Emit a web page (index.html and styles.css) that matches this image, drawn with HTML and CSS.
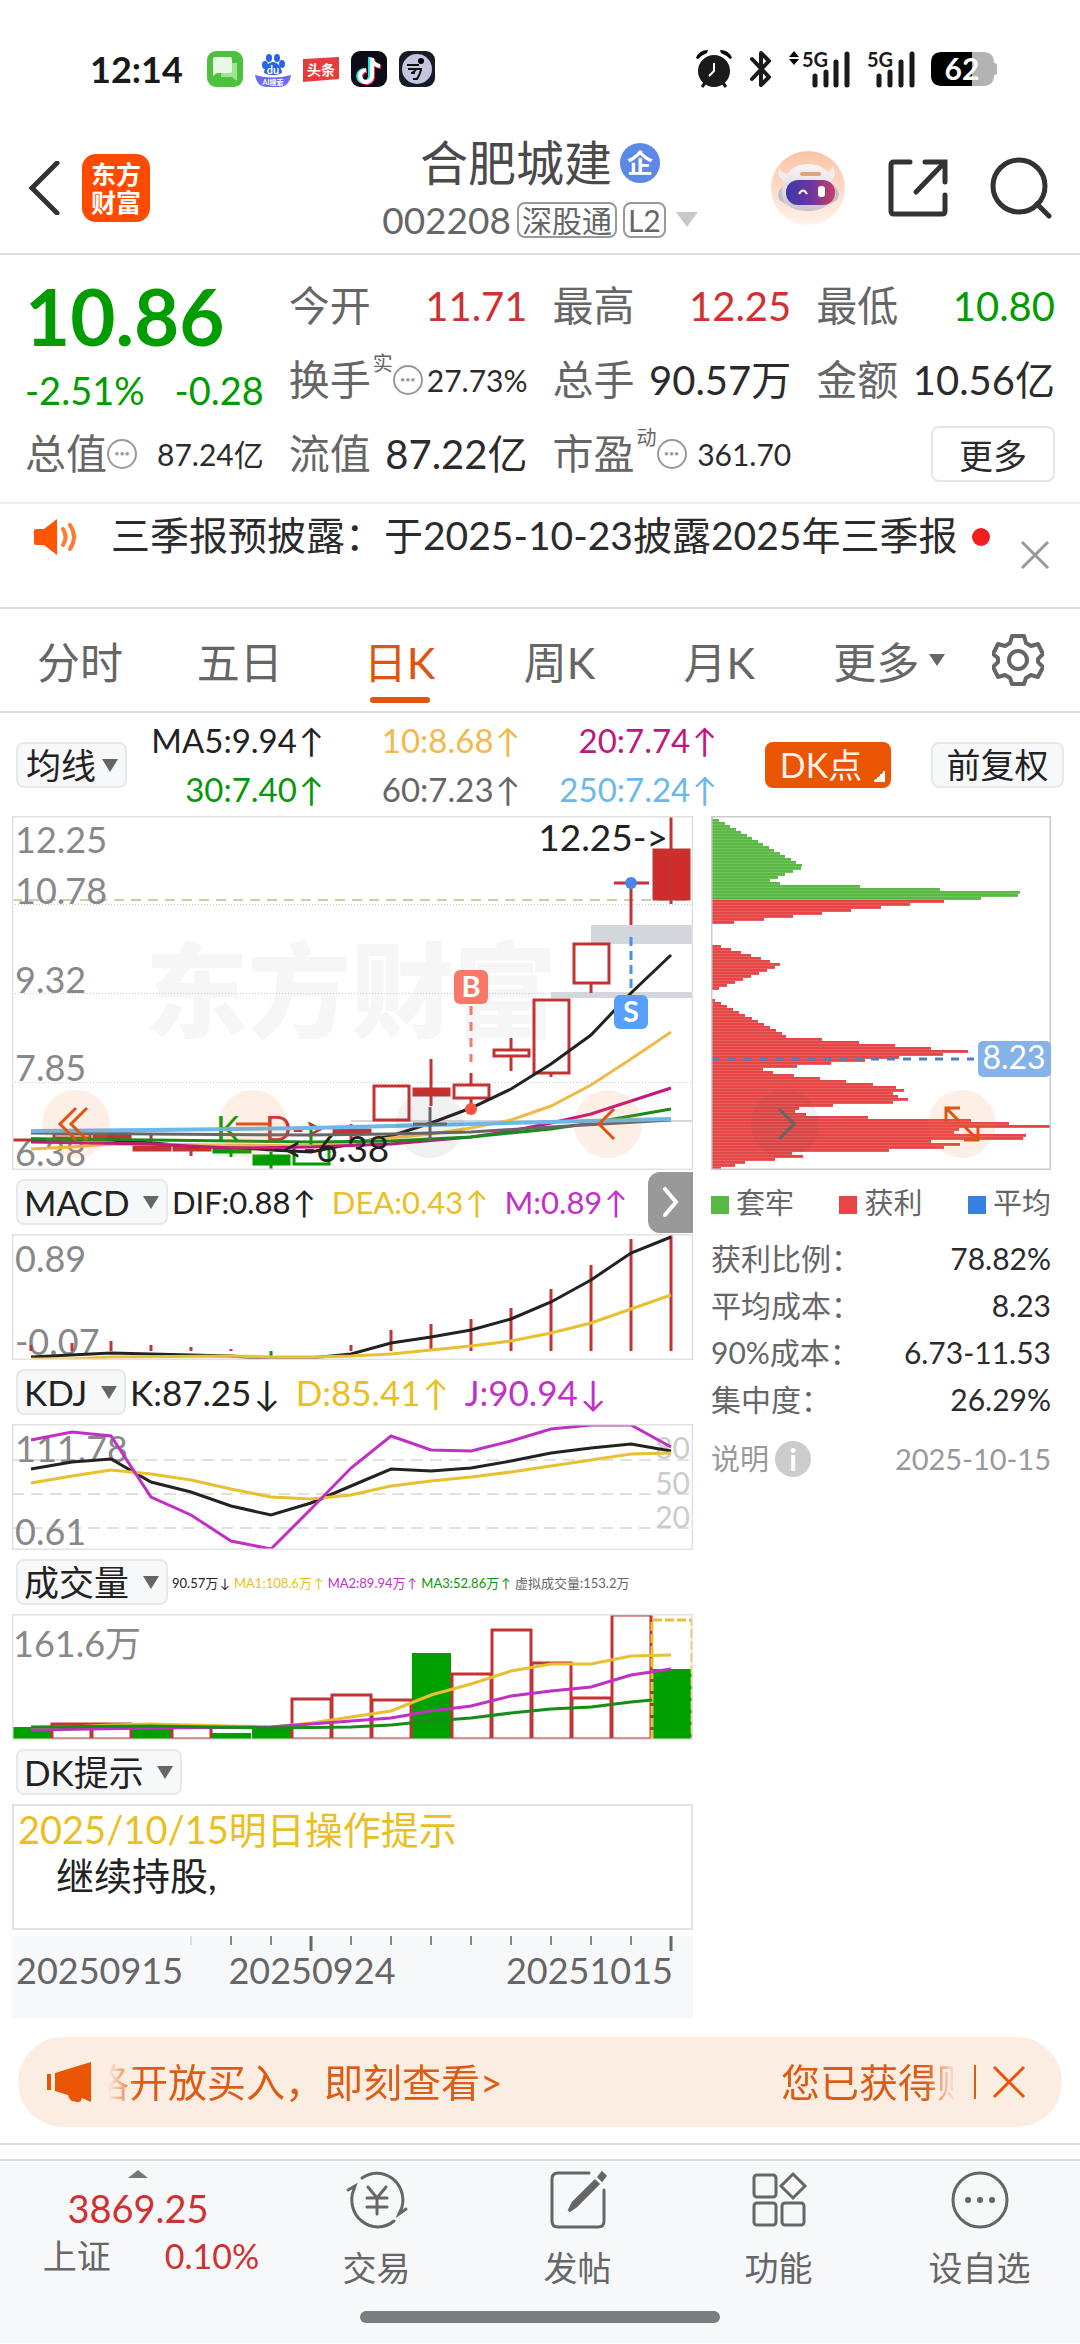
FILE: index.html
```html
<!DOCTYPE html>
<html lang="zh-CN">
<head>
    <meta charset="UTF-8">
    <meta name="viewport" content="width=device-width, initial-scale=1.0">
    <title>合肥城建 002208</title>
    <link rel="stylesheet" href="styles.css">
</head>
<body>
    <div class="status">
        <span class="time">12:14</span>
        <div class="status-apps">
            <svg viewBox="0 0 36 36"><rect width="36" height="36" rx="9" fill="#4cc23c"/><path d="M14 12h16v18l-5-4h-11z" fill="#a3e098"/><path d="M8 6h15q2 0 2 2v12q0 2-2 2h-13l-4 3V8q0-2 2-2z" fill="#e8f8e5"/></svg>
            <svg viewBox="0 0 36 36"><g fill="#2a62e8"><ellipse cx="14" cy="7" rx="3" ry="4"/><ellipse cx="22" cy="7" rx="3" ry="4"/><ellipse cx="10" cy="14" rx="3" ry="4"/><ellipse cx="27" cy="13" rx="3" ry="4"/><path d="M18 11c5 0 8 6 9 10 0 4-18 4-18 0 1-4 4-10 9-10z"/></g><path d="M0 24q18 5 36 0q-2 12-12 12h-12q-10 0-12-12z" fill="#6a6cf0"/><text x="18" y="23" class="ico-text" font-size="11">du</text><text x="18" y="34" class="ico-text" font-size="7">AI搜索</text></svg>
            <svg viewBox="0 0 36 36"><path d="M0 8l36-2v22l-36 3z" fill="#e83c3c"/><text x="18" y="24" class="ico-text" font-size="14">头条</text></svg>
            <svg viewBox="0 0 36 36"><rect width="36" height="36" rx="9" fill="#0c0b18"/><g fill="none" stroke-width="4"><path d="M19 6v18a6 6 0 1 1-6-5M19 7q1 6 8 7" stroke="#27e5e2"/><path d="M22 8v17a6 6 0 1 1-6-5M22 9q1 6 8 7" stroke="#f5315c"/><path d="M21 7v17a6 6 0 1 1-6-5M21 8q1 6 8 7" stroke="#fff"/></g></svg>
            <svg viewBox="0 0 36 36"><rect width="36" height="36" rx="9" fill="#181a26"/><circle cx="18" cy="18" r="15" fill="#c3c4de"/><circle cx="22" cy="10" r="3"/><path d="M8 14h12M9 18h13q0 3-4 10h-4M13 22l4-3M12 22h4" fill="none" stroke="#111" stroke-width="2"/></svg>
        </div>
        <div class="status-right">
            <svg width="37" height="38" viewBox="0 0 37 38"><circle cx="18" cy="21" r="16" fill="#1a1a1a"/><path d="M0 8Q3 0 12 0L11 3Q6 5 2 9zM36 8Q33 0 24 0L25 3Q30 5 34 9z"/><path d="M9 33l-3 4M27 33l3 4" stroke="#1a1a1a" stroke-width="3"/><path d="M18 13v8l-5 5" stroke="#fff" stroke-width="2" fill="none"/></svg>
            <svg width="24" height="38" viewBox="0 0 24 38"><path d="M3 9l17 18-8 8V3l8 8L3 29" fill="none" stroke="#1a1a1a" stroke-width="4" stroke-linejoin="round" stroke-linecap="round"/></svg>
            <svg width="62" height="38" viewBox="0 0 62 38"><path d="M0 7l5-6 5 6zM0 9l5 6 5-6z"/><text x="13" y="17" class="net">5G</text><path d="M26 26v9M37 22v13M47 12v23M58 4v31" stroke="#1a1a1a" stroke-width="5" stroke-linecap="round"/></svg>
            <svg width="48" height="38" viewBox="0 0 48 38"><text x="0" y="17" class="net">5G</text><path d="M12 26v9M23 22v13M34 12v23M45 4v31" stroke="#1a1a1a" stroke-width="5" stroke-linecap="round"/></svg>
            <svg width="66" height="34" viewBox="0 0 66 34"><path d="M40 0h12q11 0 11 11v12q0 11-11 11h-12z" fill="#b3b3b3"/><rect x="61" y="11" width="5" height="12" rx="2" fill="#b3b3b3"/><path d="M11 0h30v34h-30q-11 0-11-11v-12q0-11 11-11z"/><text x="31" y="28" class="ico-text" font-size="30">62</text></svg>
        </div>
    </div>

    <header class="header">
        <div class="header-left">
            <button aria-label="返回"><svg width="32" height="54" viewBox="0 0 32 54"><path d="M29 2L4 27l25 25" class="ln-dark"/></svg></button>
            <a href="#" class="logo"><span>东方</span><span>财富</span></a>
        </div>
        <div class="title">
            <h1>合肥城建<span class="qi">企</span></h1>
            <div class="code">002208<span class="tag">深股通</span><span class="tag">L2</span><i class="tri"></i></div>
        </div>
        <div class="header-right">
            <button aria-label="助手"><svg width="76" height="76" viewBox="0 0 76 76"><defs><linearGradient id="peach" x2="0" y2="1"><stop stop-color="#fbc3a4"/><stop offset="1" stop-color="#fff3ec"/></linearGradient><linearGradient id="visor"><stop stop-color="#3a3aa8"/><stop offset="0.5" stop-color="#6a35a0"/><stop offset="1" stop-color="#c84060"/></linearGradient><linearGradient id="shell" x2="0" y2="1"><stop stop-color="#fbf7f8"/><stop offset="1" stop-color="#c9c3ce"/></linearGradient></defs><circle cx="38" cy="38" r="37" fill="url(#peach)"/><path d="M9 17q2 7 9 7l-4 6q-8-3-5-13zM62 15q0 6-5 7l4 8q7-4 1-15z" fill="#f5ecee"/><path d="M13 36q-7 6-4 14l9 5zM64 36q8 6 3 14l-8 5z" fill="#c5bfcb"/><path d="M38 14c16 0 25 10 26 25 0 14-10 22-26 22s-26-6-26-20c0-15 10-27 26-27z" fill="url(#shell)"/><rect x="16" y="30" width="49" height="25" rx="12" fill="url(#visor)"/><path d="M29 44q4-7 8 0" stroke="#fff" stroke-width="2" fill="none"/><rect x="48" y="36" width="7" height="11" rx="3" fill="#fff"/><rect x="30" y="22" width="21" height="4" rx="2" fill="#e0a47c"/></svg></button>
            <button aria-label="分享"><svg width="60" height="60" viewBox="0 0 60 60"><path d="M22 4H6q-3 0-3 3v46q0 3 3 3h48q3 0 3-3V37M37 4h20v20M56 5L28 34" class="ln-dark"/></svg></button>
            <button aria-label="搜索"><svg width="62" height="62" viewBox="0 0 62 62"><circle cx="29" cy="29" r="26" class="ln-dark"/><path d="M47 47l12 12" class="ln-dark"/></svg></button>
        </div>
    </header>

    <section class="quote">
        <div class="now">
            <strong class="price">10.86</strong>
            <div class="change"><span>-2.51%</span><span>-0.28</span></div>
        </div>
        <div class="cell"><span>今开</span><b class="up">11.71</b></div>
        <div class="cell"><span>最高</span><b class="up">12.25</b></div>
        <div class="cell"><span>最低</span><b class="down">10.80</b></div>
        <div class="cell"><span>换手<sup>实</sup></span><i class="dots">•••</i><b class="small">27.73%</b></div>
        <div class="cell"><span>总手</span><b>90.57万</b></div>
        <div class="cell"><span>金额</span><b>10.56亿</b></div>
        <div class="cell"><span>总值</span><i class="dots">•••</i><b class="small">87.24亿</b></div>
        <div class="cell"><span>流值</span><b>87.22亿</b></div>
        <div class="cell"><span>市盈<sup>动</sup></span><i class="dots">•••</i><b class="small">361.70</b></div>
        <div class="cell"><button class="more">更多</button></div>
    </section>

    <section class="notice">
        <svg width="46" height="38" viewBox="0 0 46 38"><path d="M3 11h8L24 1v36L11 27H3q-2 0-2-2V13q0-2 2-2z" fill="#ff5500"/><path d="M30 11q5 8 0 16M37 7q8 12 0 24" fill="none" stroke="#ff7a33" stroke-width="4" stroke-linecap="round"/></svg>
        <p>三季报预披露：于2025-10-23披露2025年三季报</p>
        <i class="dot"></i>
        <button class="notice-close" aria-label="关闭"><svg width="30" height="30" viewBox="0 0 30 30"><path d="M2 2l26 26M28 2L2 28" stroke="#999" stroke-width="3"/></svg></button>
    </section>

    <nav class="tabs">
        <button>分时</button>
        <button>五日</button>
        <button class="on">日K</button>
        <button>周K</button>
        <button>月K</button>
        <div class="tabs-end">
            <button>更多<i class="tri"></i></button>
            <button aria-label="设置"><svg width="52" height="54" viewBox="0 0 52 54"><path d="M20 3h12l2 7 5 3 7-2 5 10-5 5v3l5 5-5 10-7-2-5 3-2 6H20l-2-6-5-3-7 2L1 34l5-5v-4l-5-4 5-10 7 2 5-3z" fill="none" stroke="#666" stroke-width="4" stroke-linejoin="round"/><circle cx="26" cy="27" r="9" fill="none" stroke="#666" stroke-width="4"/></svg></button>
        </div>
    </nav>

    <section class="ma">
        <label class="picker short"><select aria-label="主图指标"><option>均线</option></select></label>
        <div class="ma-list">
            <span class="c-black">MA5:9.94<u>↑</u></span><span class="c-yellow">10:8.68<u>↑</u></span><span class="c-magenta">20:7.74<u>↑</u></span>
            <span class="c-green">30:7.40<u>↑</u></span><span class="c-gray">60:7.23<u>↑</u></span><span class="c-blue">250:7.24<u>↑</u></span>
        </div>
        <button class="dk">DK点</button>
        <button class="fq">前复权</button>
    </section>

    <main class="board">
        <div class="charts">
            <!-- K line -->
            <svg class="chart" viewBox="0 0 681 354">
                <text x="133" y="214" class="mark">东方财富</text>
                <g class="grid-dot"><path d="M0 88.5H681M0 177.5H681M0 266.5H681"/></g>
                <g fill="#d3d7dc"><path d="M579 109h102v19H579zM539 176h142v6H539zM339 304h342v2H339z"/></g>
                <path d="M0 84H681" stroke="#d8c8a8" stroke-width="2" stroke-dasharray="10 7"/>
                <g class="axis"><text x="3" y="37">12.25</text><text x="3" y="88">10.78</text><text x="3" y="177">9.32</text><text x="3" y="265">7.85</text><text x="3" y="350">6.38</text></g>
                <text x="204" y="325" class="sig" fill="#009c00">K</text>
                <text x="253" y="325" class="sig" fill="#d03030">D-&gt;</text>
                <g class="k-red">
                    <path d="M0 324h35M642 34V83h35V34zM602 67h35M402 273h35v6h-35zM322 314h36v3h-36zM162 330h36v4h-36zM122 330h36v4h-36zM82 318h36v4h-36z" class="solid"/>
                    <path d="M562 128h35v39h-35zM522 184h35v73h-35zM482 234h35v6h-35zM442 269h35v13h-35zM362 270h35v34h-35zM42 318h36v4h-36z"/>
                    <path d="M659 0V88M619 67v42M579 167v10M539 257v4M499 222v12M499 240v15M459 257v12M459 282v8M419 243v47M339 308v17M179 330v10M139 318v17M60 322v4"/>
                </g>
                <g class="k-green">
                    <path d="M202 332h36v4h-36zM242 340h35v8h-35z" class="solid"/>
                    <path d="M282 330h35v18h-35zM219 336v5M259 336v18M299 309v21"/>
                </g>
                <g class="ln">
                    <polyline class="s-black" points="19,323 99,324 179,330 219,331 259,334 299,336 339,328 379,320 419,307 459,292 499,273 539,248 579,219 619,177 659,139"/>
                    <polyline class="s-yellow" points="19,333 60,331 99,328 219,329 299,330 339,327 379,322 419,318 459,312 499,304 539,290 579,269 619,243 659,216"/>
                    <polyline class="s-magenta" points="19,326 139,328 219,332 299,331 379,328 459,321 499,315 539,307 579,298 619,285 659,272"/>
                    <polyline class="s-green" points="19,323 139,324 299,326 379,325 459,321 539,313 579,307 659,293"/>
                    <polyline class="s-gray" points="19,317 139,318 299,319 379,318 459,316 539,311 659,304"/>
                    <polyline class="s-blue" points="19,315 139,314 299,312 459,308 659,303" stroke-width="4"/>
                </g>
                <path d="M459 190v56" stroke="#f87968" stroke-width="3" stroke-dasharray="9 7"/>
                <circle cx="459" cy="293" r="6" fill="#f4553e"/>
                <rect x="442" y="154" width="34" height="34" rx="6" fill="#f87968"/><text x="459" y="181" class="badge">B</text>
                <path d="M619 121v56" stroke="#4a90f0" stroke-width="3" stroke-dasharray="9 5"/>
                <circle cx="619" cy="67" r="6" fill="#4a86e8"/>
                <rect x="602" y="179" width="34" height="34" rx="6" fill="#589ffa"/><text x="619" y="206" class="badge">S</text>
                <text x="656" y="35" class="tip" text-anchor="end">12.25-&gt;</text>
                <text x="269" y="346" class="tip">&lt;-6.38</text>
                <rect x="0" y="0" width="681" height="354" class="frame"/>
            </svg>

            <div class="head">
                <label class="picker"><select aria-label="副图指标"><option>MACD</option></select></label>
                <div class="vals w-macd"><span class="c-black">DIF:0.88<u>↑</u></span><span class="c-gold">DEA:0.43<u>↑</u></span><span class="c-purple">M:0.89<u>↑</u></span></div>
                <button class="next" aria-label="展开"><svg width="16" height="30" viewBox="0 0 16 30"><path d="M2 2l11 13L2 28" fill="none" stroke="#fff" stroke-width="4" stroke-linecap="round"/></svg></button>
            </div>
            <svg class="chart" viewBox="0 0 681 126">
                <g class="axis"><text x="3" y="38">0.89</text><text x="3" y="121">-0.07</text></g>
                <path class="k-red" d="M19 111v6M60 109v8M99 107v10M139 111v6M179 113v4M219 115v2M339 111v6M379 96v21M419 90v27M459 85v32M499 74v43M539 55v62M579 31v86M619 5v112M659 0v117"/>
                <path class="k-green" d="M259 117v5"/>
                <g class="ln">
                    <polyline class="s-black" points="19,123 99,119 219,122 259,125 299,124 339,120 379,109 419,103 459,96 499,85 539,68 579,46 619,19 659,3"/>
                    <polyline class="s-gold" points="19,125 60,125 99,123 219,122 259,123 299,123 339,122 379,120 419,116 459,112 499,107 539,99 579,89 619,75 659,61"/>
                </g>
                <rect x="0" y="0" width="681" height="126" class="frame"/>
            </svg>

            <div class="head">
                <label class="picker"><select aria-label="副图指标"><option>KDJ</option></select></label>
                <div class="vals w-kdj"><span class="c-black">K:87.25<u>↓</u></span><span class="c-gold">D:85.41<u>↑</u></span><span class="c-purple">J:90.94<u>↓</u></span></div>
            </div>
            <svg class="chart" viewBox="0 0 681 126">
                <path d="M0 36H681M0 70H681M0 104H681" stroke="#e0e0e0" stroke-width="2" stroke-dasharray="12 7"/>
                <g class="scale"><text x="678" y="35">80</text><text x="678" y="70">50</text><text x="678" y="104">20</text></g>
                <g class="axis"><text x="3" y="38">111.78</text><text x="3" y="121">0.61</text></g>
                <g class="ln">
                    <polyline class="s-black" points="19,45 60,38 99,35 139,58 179,68 219,82 259,91 299,79 339,62 379,45 419,47 459,44 499,37 539,29 579,24 619,20 659,27"/>
                    <polyline class="s-gold" points="19,59 60,52 99,46 139,50 179,56 219,65 259,73 299,75 339,71 379,62 419,57 459,53 499,48 539,42 579,36 619,30 659,29"/>
                    <polyline class="s-purple" points="19,16 60,8 99,12 139,73 179,91 219,117 259,125 299,85 339,44 379,12 419,26 459,27 499,17 539,5 579,1 619,1 659,23"/>
                </g>
                <rect x="0" y="0" width="681" height="126" class="frame"/>
            </svg>

            <div class="head">
                <label class="picker"><select aria-label="副图指标"><option>成交量</option></select></label>
                <div class="vals w-vol"><span class="c-black">90.57万<u>↓</u></span><span class="c-gold">MA1:108.6万<u>↑</u></span><span class="c-purple">MA2:89.94万<u>↑</u></span><span class="c-green">MA3:52.86万<u>↑</u></span><span class="c-gray">虚拟成交量:153.2万</span></div>
            </div>
            <svg class="chart" viewBox="0 0 681 126">
                <text x="1" y="43" class="axis">161.6万</text>
                <path class="vol-green" d="M0 113h39v12H0zM120 109h39v16h-39zM200 119h39v6h-39zM240 113h39v12h-39zM400 39h39v86h-39zM640 55h40v70h-40z"/>
                <path class="k-red" d="M40 110h39v15H40zM80 110h39v15H80zM160 112h39v13h-39zM280 85h39v40h-39zM320 81h39v44h-39zM360 86h39v39h-39zM440 60h39v65h-39zM480 16h39v109h-39zM520 49h39v76h-39zM560 84h39v41h-39zM600 1h39v124h-39z"/>
                <path d="M640 125V6h40v119" fill="none" stroke="#e8c030" stroke-width="3" stroke-dasharray="9 3"/>
                <g class="ln">
                    <polyline class="s-gold" points="19,115 99,111 139,110 219,112 259,113 299,109 339,103 379,97 419,81 459,70 499,57 539,50 579,50 619,42 659,41"/>
                    <polyline class="s-purple" points="19,116 139,114 259,113 299,110 339,107 379,104 419,97 459,92 499,82 539,77 579,73 619,61 659,55"/>
                    <polyline class="s-green" points="19,113 139,112 259,114 339,113 379,111 419,107 459,104 499,99 539,95 579,93 619,88 640,86"/>
                </g>
                <rect x="0" y="0" width="681" height="126" class="frame"/>
            </svg>

            <div class="head">
                <label class="picker"><select aria-label="副图指标"><option>DK提示</option></select></label>
            </div>
            <div class="hint">
                <p class="c-gold">2025/10/15明日操作提示</p>
                <p class="hint-body">继续持股,</p>
            </div>
            <svg class="dates" viewBox="0 0 681 83">
                <path d="M179 0v9" stroke="#ddd" stroke-width="2"/>
                <path d="M219 0v9M259 0v9M339 0v9M379 0v9M419 0v9M459 0v9M499 0v9M539 0v9M579 0v9M619 0v9" stroke="#888" stroke-width="2"/>
                <path d="M299 0v15M659 0v15" stroke="#666" stroke-width="3"/>
                <text x="4" y="48">20250915</text><text x="300" y="48" text-anchor="middle">20250924</text><text x="661" y="48" text-anchor="end">20251015</text>
            </svg>
        </div>

        <aside class="chips">
            <svg class="chart" viewBox="0 0 340 354">
                <g id="chipBars"></g>
                <path d="M0 243H263" stroke="#4a80cc" stroke-width="3" stroke-dasharray="8 8"/>
                <rect x="0" y="0" width="340" height="354" fill="none" stroke="#ccc" stroke-width="3"/>
                <rect x="267" y="225" width="73" height="36" rx="5" fill="#86b2ea"/><text x="303" y="253" class="avg">8.23</text>
            </svg>
            <ul class="legend">
                <li class="l-green">套牢</li>
                <li class="l-red">获利</li>
                <li class="l-blue">平均</li>
            </ul>
            <dl class="stats">
                <div><dt>获利比例：</dt><dd>78.82%</dd></div>
                <div><dt>平均成本：</dt><dd>8.23</dd></div>
                <div><dt>90%成本：</dt><dd>6.73-11.53</dd></div>
                <div><dt>集中度：</dt><dd>26.29%</dd></div>
            </dl>
            <div class="explain"><a href="#">说明<i>i</i></a><time>2025-10-15</time></div>
        </aside>

        <div class="tools">
            <button aria-label="最左"><svg viewBox="0 0 68 68"><path d="M34 18L18 34l16 16M45 18L29 34l16 16"/></svg></button>
            <button aria-label="缩小"><svg viewBox="0 0 68 68"><path d="M17 34h34"/></svg></button>
            <button class="off" aria-label="放大"><svg viewBox="0 0 68 68"><path d="M17 34h34M34 17v34"/></svg></button>
            <button aria-label="左移"><svg viewBox="0 0 68 68"><path d="M40 19L25 34l15 15"/></svg></button>
            <button class="off" aria-label="右移"><svg viewBox="0 0 68 68"><path d="M28 19l15 15-15 15"/></svg></button>
            <button aria-label="全屏"><svg viewBox="0 0 68 68"><path d="M18 32V18h14M19 19l12 12M36 50h14V36M49 49L37 37"/></svg></button>
        </div>
    </main>

    <section class="banner">
        <svg width="46" height="40" viewBox="0 0 46 40"><path d="M0 12h4v16H0zM8 11L44 0v40l-9-4q-1 5-6 4l-2-1q-4 1-6-6L8 29z" fill="#ea5504"/></svg>
        <div class="marquee"><span>格开放买入，即刻查看&gt;</span><span>您已获得购</span></div>
        <button aria-label="关闭"><svg width="34" height="34" viewBox="0 0 34 34"><path d="M2 2l30 30M32 2L2 32" stroke="#ea5504" stroke-width="3"/></svg></button>
    </section>

    <footer class="footer">
        <a href="#" class="index">
            <i class="tri"></i>
            <b>3869.25</b>
            <span>上证<em>0.10%</em></span>
        </a>
        <a href="#"><svg viewBox="0 0 64 60"><path d="M17 8A26 27 0 0 1 57 37l-3 7 7-5M49 51A26 27 0 0 1 9 19l1-3-7 4M23 17l9 11 9-11M32 28v16M22 28h20M22 37h20"/></svg>交易</a>
        <a href="#"><svg viewBox="0 0 64 60"><path d="M43 3H12q-6 0-6 6v42q0 6 6 6h40q6 0 6-6V20"/><path d="M49 11L27 33l-4 8 7-5 22-22zM53 7l3-4 3 3-3 4z" fill="#666"/></svg>发帖</a>
        <a href="#"><svg viewBox="0 0 64 60"><rect x="7" y="5" width="22" height="22" rx="3"/><rect x="7" y="33" width="22" height="22" rx="3"/><rect x="35" y="33" width="22" height="22" rx="3"/><path d="M46 4l12 12-12 12-12-12z"/></svg>功能</a>
        <a href="#"><svg viewBox="0 0 64 60"><circle cx="32" cy="30" r="27"/><path d="M20 30h.1M32 30h.1M44 30h.1" stroke-width="6"/></svg>设自选</a>
        <div class="homebar"></div>
    </footer>

    <script>
        // chip distribution, top price to bottom price
        const chips=[2,8,14,19,25,30,36,41,47,52,58,63,69,74,80,85,91,90,82,74,67,59,69,149,229,309,307,270,
            233,199,170,140,111,82,53,23,0,0,0,0,0,0,0,10,20,30,40,50,59,69,64,56,48,40,32,24,16,8,0,0,0,
            4,10,16,22,28,34,41,47,53,59,65,71,75,111,148,184,220,257,232,188,154,120,86,52,62,83,109,135,
            162,185,193,182,187,197,182,122,88,84,95,157,260,298,340,248,243,315,312,220,249,233,178,81,92,64,34,24,10];
        const profitFrom=28;
        const bars=document.querySelector('#chipBars');
        for(let i=0; i<chips.length; i++){
            const bar=document.createElementNS('http://www.w3.org/2000/svg','rect');
            bar.setAttribute('y',i*3);
            bar.setAttribute('width',chips[i]);
            bar.setAttribute('height',2.85);
            bar.setAttribute('class',i<profitFrom ? 'chip-loss' : 'chip-profit');
            bars.appendChild(bar);
        }
    </script>
</body>
</html>
```
FILE: styles.css
```css
*{padding:0; margin:0; list-style:none; box-sizing:border-box;}
:root{
    --up:#d03030;
    --down:#009c00;
    --orange:#ea5504;
    --text:#2b2b2b;
    --sub:#666;
    --line:#dcdcdc;
    --panel:#f7f8fa;
    --font:Lato, Inter, "Noto Sans CJK SC", sans-serif;
}
body{background:#fff; color:var(--text); font-family:var(--font); font-size:38px;}
button,select{font-family:inherit; color:inherit; border:0; background:none; font-size:inherit;}
a{color:inherit; text-decoration:none;}
i,em{font-style:normal;}
b{font-weight:400;}
u{text-decoration:none; margin-left:2px;}
svg{display:block;}
.tri{display:inline-block; border:solid transparent; border-width:12px 8px 0; border-top-color:currentColor;}

/* colours of the indicator lines */
.c-black{color:#222;} .c-yellow{color:#f3b94c;} .c-magenta{color:#c0187c;}
.c-green{color:#0a960a;} .c-gray{color:#666;} .c-blue{color:#6cb8ea;}
.c-gold{color:#eabf25;} .c-purple{color:#c32fc9;}
.s-black{stroke:#222;} .s-yellow{stroke:#f0b94c;} .s-magenta{stroke:#c0187c;}
.s-green{stroke:#188c18;} .s-gray{stroke:#666;} .s-blue{stroke:#6cb8ea;}
.s-gold{stroke:#e8c030;} .s-purple{stroke:#c030c4;}

/* status bar */
.status{display:flex; align-items:center; height:122px; padding:16px 83px 0 90px;}
.time{font-size:36px; font-weight:700; color:#1a1a1a;}
.status-apps{display:flex; gap:12px; margin-left:24px; flex:1;}
.status-apps svg{width:36px; height:36px;}
.status-right{display:flex; align-items:center; gap:16px;}
.ico-text{fill:#fff; text-anchor:middle; font-weight:700;}
.net{font-size:20px; font-weight:700; fill:#1a1a1a;}

/* header */
.header{display:grid; grid-template-columns:1fr auto 1fr; align-items:center; height:133px; padding:0 28px; border-bottom:2px solid var(--line);}
.header-left,.header-right{display:flex; align-items:center;}
.header-left{gap:22px;}
.header-right{justify-content:flex-end; gap:42px;}
.ln-dark{fill:none; stroke:#333; stroke-width:5; stroke-linecap:round;}
.logo{width:68px; height:68px; border-radius:14px; background:#ff4a00; color:#fff; font-size:25px; line-height:28px; font-weight:700; display:flex; flex-direction:column; align-items:center; justify-content:center;}
.title{padding-top:4px; text-align:center;}
.title h1{display:flex; align-items:center; justify-content:center; gap:8px; font-size:48px; font-weight:400; line-height:60px; color:#4a4a4a;}
.qi{width:40px; height:40px; line-height:40px; border-radius:50%; background:#5c88e6; color:#fff; font-size:26px; font-weight:700;}
.code{display:flex; align-items:center; justify-content:center; gap:6px; font-size:37px; line-height:54px; color:var(--sub);}
.tag{border:2px solid #999; border-radius:8px; padding:0 3px; font-size:30px; line-height:32px;}
.code .tri{border-width:15px 11px 0; border-top-color:#c8c8c8; margin-left:4px;}

/* quote */
.quote{display:grid; grid-template-columns:repeat(4,1fr); grid-auto-rows:74px; column-gap:25px; padding:14px 25px 11px; border-bottom:2px solid #eee;}
.now{grid-row:span 2; color:var(--down);}
.price{display:block; font-size:78px; line-height:94px; font-weight:700;}
.change{display:flex; justify-content:space-between; line-height:54px;}
.cell{display:flex; align-items:center; font-size:40px; line-height:74px; color:var(--sub); white-space:nowrap;}
.cell>span{position:relative; font-size:41px;}
.cell b{margin-left:auto; color:var(--text);}
.cell .small{font-size:30px;}
.cell .up{color:var(--up);}
.cell .down{color:var(--down);}
.cell sup{position:absolute; left:100%; top:8px; margin-left:2px; font-size:20px; line-height:24px;}
.cell span:has(sup){margin-right:22px;}
.dots{width:30px; height:30px; border:2px solid #999; border-radius:50%; color:#999; font-size:9px; line-height:26px; text-align:center;}
.more{margin-left:auto; width:124px; height:56px; border:2px solid #e6e6e6; border-radius:8px; font-size:34px; color:var(--text);}

/* notice */
.notice{display:flex; align-items:flex-start; height:105px; padding:4px 30px 0 33px; border-bottom:2px solid var(--line);}
.notice svg{margin-top:10px;}
.notice p{margin-left:32px; font-size:39px; line-height:54px; white-space:nowrap;}
.dot{width:18px; height:18px; border-radius:50%; background:#f02020; margin:20px 0 0 auto;}
.notice-close{margin:32px 0 0 30px;}
.notice-close svg{margin:0;}

/* tabs */
.tabs{display:flex; height:104px; border-bottom:2px solid var(--line); color:var(--sub); font-size:43px;}
.tabs>button{flex:0 0 14.8%; position:relative;}
.tabs .on{color:#dd5511;}
.tabs .on:after{content:''; position:absolute; left:50%; bottom:8px; width:60px; height:6px; margin-left:-30px; border-radius:3px; background:#dd5511;}
.tabs-end{flex:1; display:flex; align-items:center; justify-content:space-between; padding:0 36px 0 34px;}
.tabs-end button{display:flex; align-items:center; gap:10px;}

/* moving averages */
.ma{display:flex; align-items:center; height:103px; padding:0 16px;}
.ma-list{flex:1; display:grid; grid-template-columns:repeat(3,1fr); text-align:right; font-size:33px; line-height:49px; white-space:nowrap;}
.picker{position:relative; display:flex;}
.picker select{appearance:none; height:46px; padding:0 36px 0 6px; border:2px solid #e6e8ec; border-radius:8px; background:var(--panel); font-size:35px; color:#222;}
.picker:after{content:''; position:absolute; right:9px; top:17px; border:solid transparent; border-width:13px 8px 0; border-top-color:var(--sub); pointer-events:none;}
.picker.short select{padding:0 28px 0 8px;}
.dk,.fq{height:46px; border-radius:8px; font-size:34px; line-height:42px;}
.dk{position:relative; width:126px; padding-right:14px; margin-left:48px; background:var(--orange); color:#fff3e8;}
.dk:after{content:''; position:absolute; right:6px; bottom:6px; width:12px; height:12px; background:linear-gradient(135deg,transparent 50%,#fff 50%);}
.fq{width:133px; margin-left:40px; border:2px solid #e6e8ec; background:var(--panel); color:#222;}

/* charts */
.board{position:relative; display:grid; grid-template-columns:681fr 340fr; column-gap:18px; padding:0 29px 0 12px;}
.chart{width:100%; height:auto;}
.frame{fill:none; stroke:#e2e2e2; stroke-width:3;}
.axis{font-size:36px; fill:#888;}
.mark{font-size:103px; font-weight:900; fill:#f6f6f6;}
.grid-dot{stroke:#ccc; stroke-dasharray:1 2;}
.k-red,.k-green{fill:none; stroke-width:3;}
.k-red{stroke:#c23434;} .k-red .solid{fill:#d02c2c;}
.k-green{stroke:#009c00;} .k-green .solid{fill:#009c00;}
.vol-green{fill:#00a000;}
.ln{fill:none; stroke-width:3;}
.sig{font-size:35px;}
.tip{font-size:37px; fill:#222;}
.badge{font-size:29px; font-weight:700; fill:#fff; text-anchor:middle;}
.scale{font-size:30px; fill:#ccc; text-anchor:end;}
.head{display:flex; align-items:center; height:64px; padding-left:4px;}
.vals{display:flex; white-space:nowrap; margin-left:4px; flex:1;}
.w-macd{font-size:31px; gap:16px;}
.w-kdj{font-size:35px; gap:16px;}
.w-vol{font-size:13px; gap:4px;}
.next{width:45px; height:61px; display:flex; align-items:center; justify-content:center; border-radius:12px 0 0 12px; background:#999;}
.hint{height:126px; padding:0 4px; border:2px solid #e2e2e2; line-height:46px;}
.hint-body{padding-left:38px; color:#222;}
.dates{width:100%; margin-top:6px; background:var(--panel); font-size:36px; fill:var(--sub);}

/* round buttons over both charts */
.tools{position:absolute; top:274px; left:42px; right:84px; display:flex; justify-content:space-between;}
.tools button{width:68px; height:68px; border-radius:50%; background:rgba(250,120,50,0.12);}
.tools path{fill:none; stroke:#dd5511; stroke-width:3;}
.tools .off{background:rgba(80,80,80,0.08);}
.tools .off path{stroke:#666;}

/* chip distribution */
.chip-loss{fill:#5ab944;}
.chip-profit{fill:#e64646;}
.avg{font-size:32px; fill:#fff; text-anchor:middle;}
.legend,.stats div,.explain{display:flex; justify-content:space-between; align-items:center;}
.legend{height:62px; font-size:29px; color:var(--sub);}
.legend li:before{content:''; display:inline-block; width:18px; height:18px; margin-right:7px;}
.l-green:before{background:#5ab944;}
.l-red:before{background:#e64646;}
.l-blue:before{background:#3680e0;}
.stats{padding-top:3px; font-size:30px; line-height:47px;}
.stats dt{color:var(--sub);}
.explain{font-size:29px; line-height:72px; color:#999;}
.explain a{display:flex; align-items:center; gap:6px;}
.explain i{width:36px; height:36px; border-radius:50%; background:#ccc; color:#fff; font-size:30px; font-weight:700; line-height:36px; text-align:center;}

/* banner */
.banner{display:flex; align-items:center; height:90px; margin:18px 18px 16px; padding:0 36px 0 29px; border-radius:45px; background:#fcede3; color:#dd5b14;}
.marquee{flex:1; display:flex; justify-content:space-between; margin:0 18px 0 15px; overflow:hidden; font-size:39px; line-height:54px; white-space:nowrap; -webkit-mask-image:linear-gradient(90deg,transparent,#000 30px,#000 calc(100% - 30px),transparent);}
.marquee span:first-child{margin-left:-18px;}
.marquee span:last-child{margin-right:-20px;}
.banner button{padding-left:16px; border-left:2px solid #dd5b14;}

/* footer */
.footer{position:relative; display:grid; grid-template-columns:276fr repeat(4,201fr); height:200px; padding-bottom:60px; border-top:2px solid var(--line); background:linear-gradient(#fff 14px,var(--line) 14px,var(--line) 16px,var(--panel) 16px); color:var(--sub); font-size:34px;}
.footer a{display:flex; flex-direction:column; align-items:center; padding-top:25px; line-height:40px; gap:18px;}
.footer svg{width:64px; height:60px; fill:none; stroke:var(--sub); stroke-width:3; stroke-linecap:round;}
.footer .index{gap:0; line-height:48px;}
.index .tri{border-width:0 10px 8px; border-bottom-color:#777; margin-bottom:6px;}
.index b{font-size:38px; color:var(--up);}
.index span{padding-left:26px;}
.index em{margin-left:54px; color:var(--up);}
.homebar{position:absolute; left:33.3%; right:33.3%; bottom:20px; height:12px; border-radius:6px; background:#7b7c7e;}
```
